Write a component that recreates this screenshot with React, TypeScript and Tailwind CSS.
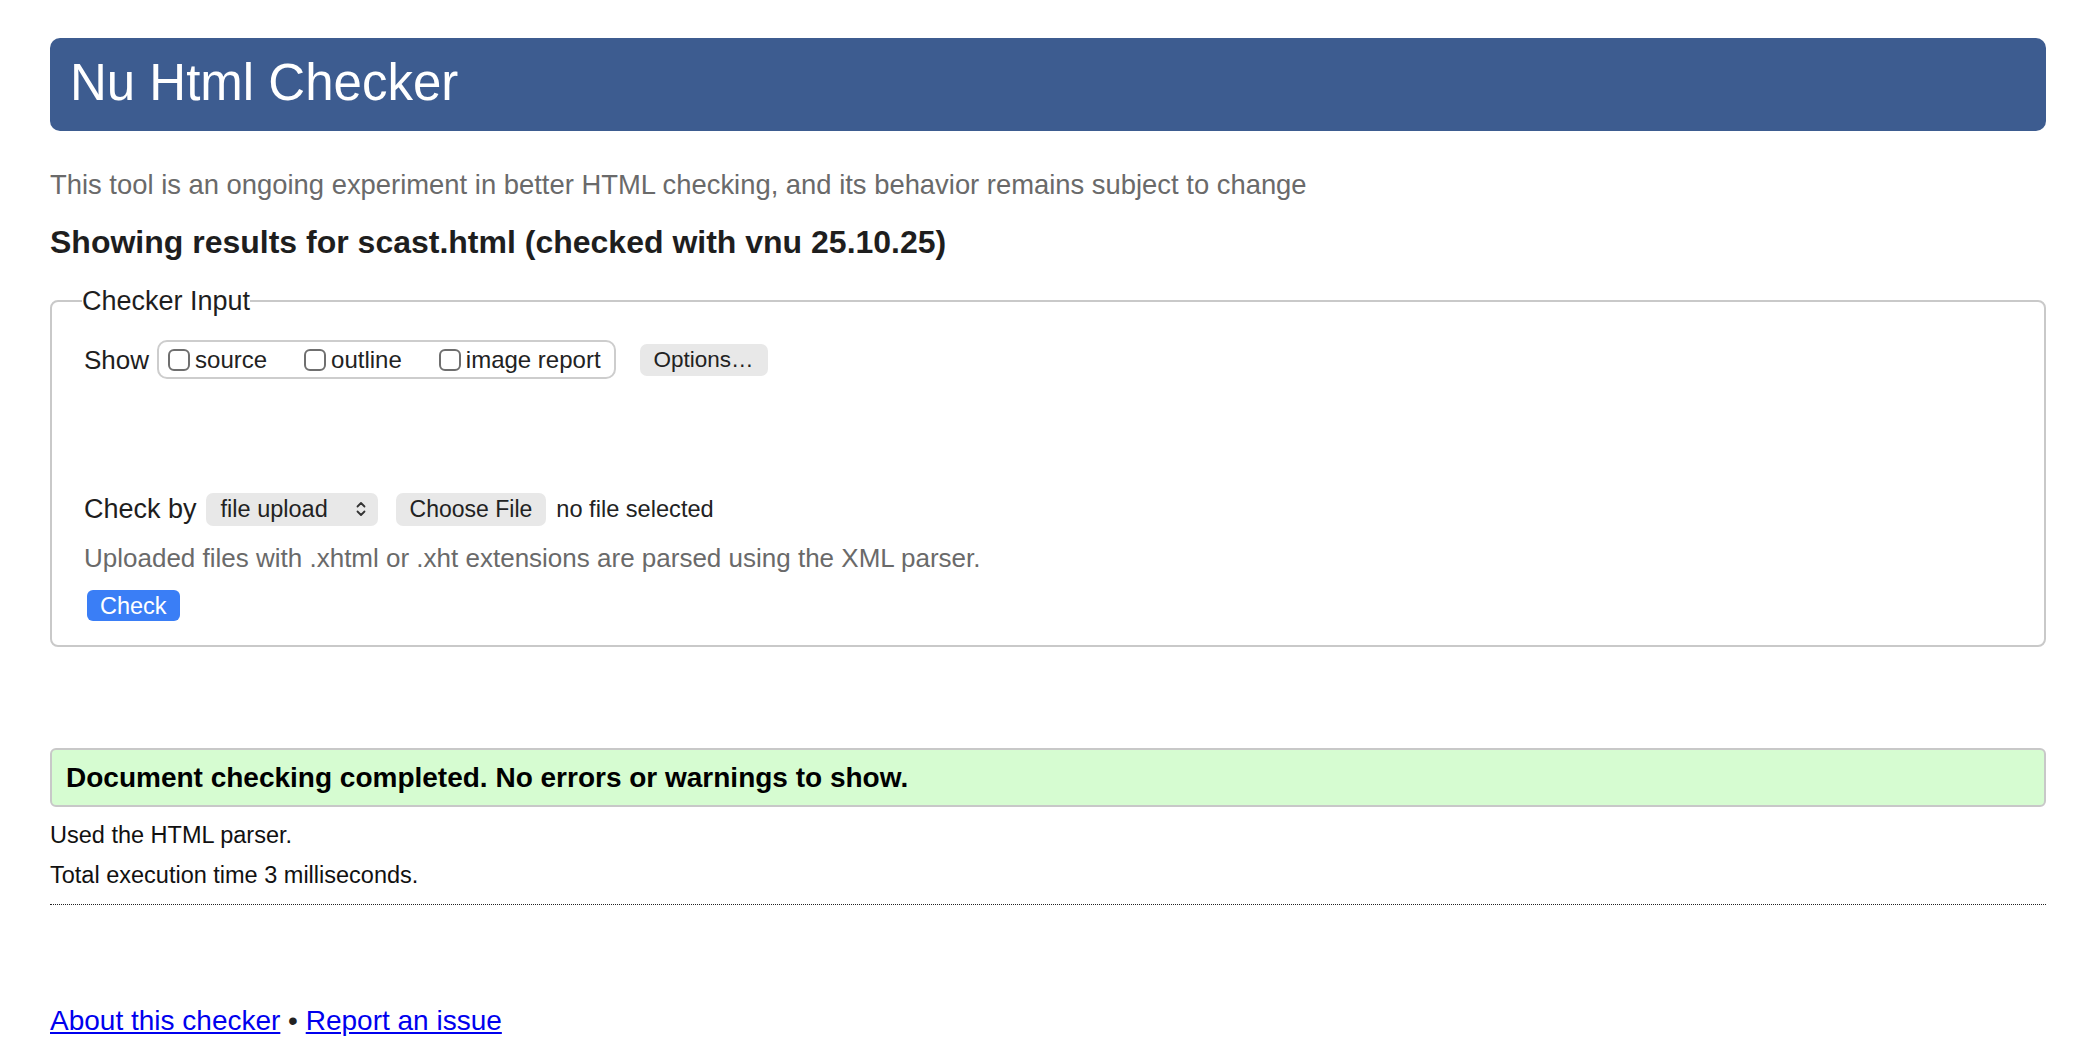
import React from "react";

function Box({ label }: { label: string }) {
  return (
    <span className="flex items-center">
      <span className="w-[22px] h-[22px] shrink-0 rounded-[6px] border-2 border-[#6f6f6f] bg-white mr-[5px]" />
      <span className="text-[24px] leading-[28px] text-[#222]">{label}</span>
    </span>
  );
}

export default function App() {
  return (
    <div className="min-h-[1050px] bg-white font-['Liberation_Sans',Arial,sans-serif] pl-[50px] pr-[38px] pt-[38px] pb-[10px]">
      <div className="h-[93px] rounded-[10px] bg-[#3d5c90] flex items-center pl-[20px] pb-[4px]">
        <h1 className="text-[51px] leading-[60px] text-white">Nu Html Checker</h1>
      </div>

      <p className="mt-[39px] text-[27.4px] leading-[30px] text-[#6a6a6a]">
        This tool is an ongoing experiment in better HTML checking, and its behavior remains subject to change
      </p>

      <h2 className="mt-[25px] text-[32px] leading-[34px] font-bold text-[#1e1e1e]">
        Showing results for scast.html (checked with vnu 25.10.25)
      </h2>

      <fieldset className="mt-[28px] border-2 border-[#c9c9c9] rounded-[8px] px-[32px] pt-0 pb-[24px]">
        <legend className="-ml-[2px] px-0 text-[27px] leading-[28px] text-[#1e1e1e]">Checker Input</legend>

        <div className="mt-[25px] h-[39px] flex items-center">
          <span className="text-[26px] leading-[30px] text-[#1e1e1e]">Show</span>
          <div className="ml-[8px] h-[39px] border-2 border-[#cdcdcd] rounded-[10px] flex items-center pl-[9px] pr-[13px] gap-[37px]">
            <Box label="source" />
            <Box label="outline" />
            <Box label="image report" />
          </div>
          <button className="ml-[24px] h-[32px] px-[14px] rounded-[7px] bg-[#e8e8e8] text-[22.5px] leading-[28px] text-[#222]">
            Options…
          </button>
        </div>

        <div className="mt-[113px] h-[34px] flex items-center">
          <span className="text-[27px] leading-[30px] text-[#1e1e1e]">Check by</span>
          <div className="ml-[9px] h-[33px] w-[172px] rounded-[7px] bg-[#e8e8e8] flex items-center justify-between pl-[15px] pr-[11px]">
            <span className="text-[23.5px] leading-[28px] text-[#222]">file upload</span>
            <svg width="12" height="18" viewBox="0 0 12 18" fill="none" stroke="#333" strokeWidth="1.8" strokeLinecap="round" strokeLinejoin="round">
              <path d="M2.5 6.5 L6 3 L9.5 6.5" />
              <path d="M2.5 11.5 L6 15 L9.5 11.5" />
            </svg>
          </div>
          <button className="ml-[18px] h-[33px] px-[14px] rounded-[7px] bg-[#e8e8e8] text-[23px] leading-[28px] text-[#222]">
            Choose File
          </button>
          <span className="ml-[10px] text-[23.6px] leading-[28px] text-[#222]">no file selected</span>
        </div>

        <p className="mt-[18px] text-[26px] leading-[28px] text-[#6a6a6a]">
          Uploaded files with .xhtml or .xht extensions are parsed using the XML parser.
        </p>

        <button className="mt-[18px] ml-[3px] h-[31px] px-[13px] rounded-[6px] bg-[#3a7ef6] text-white text-[23.5px] leading-[28px]">
          Check
        </button>
      </fieldset>

      <div className="mt-[101px] h-[59px] rounded-[6px] border-2 border-[#c8c8c8] bg-[#d6fcd1] flex items-center pl-[14px]">
        <span className="text-[28px] leading-[32px] font-bold text-black">
          Document checking completed. No errors or warnings to show.
        </span>
      </div>

      <p className="mt-[13px] text-[23.5px] leading-[30px] text-[#111]">Used the HTML parser.</p>
      <p className="mt-[10px] text-[23.5px] leading-[30px] text-[#111]">Total execution time 3 milliseconds.</p>

      <div className="mt-[14px] border-t border-dotted border-[#222]" />

      <div className="mt-[99px] text-[28px] leading-[34px] text-[#222]">
        <a href="#" className="text-[#0000ee] underline">About this checker</a>
        <span> • </span>
        <a href="#" className="text-[#0000ee] underline">Report an issue</a>
      </div>
    </div>
  );
}
